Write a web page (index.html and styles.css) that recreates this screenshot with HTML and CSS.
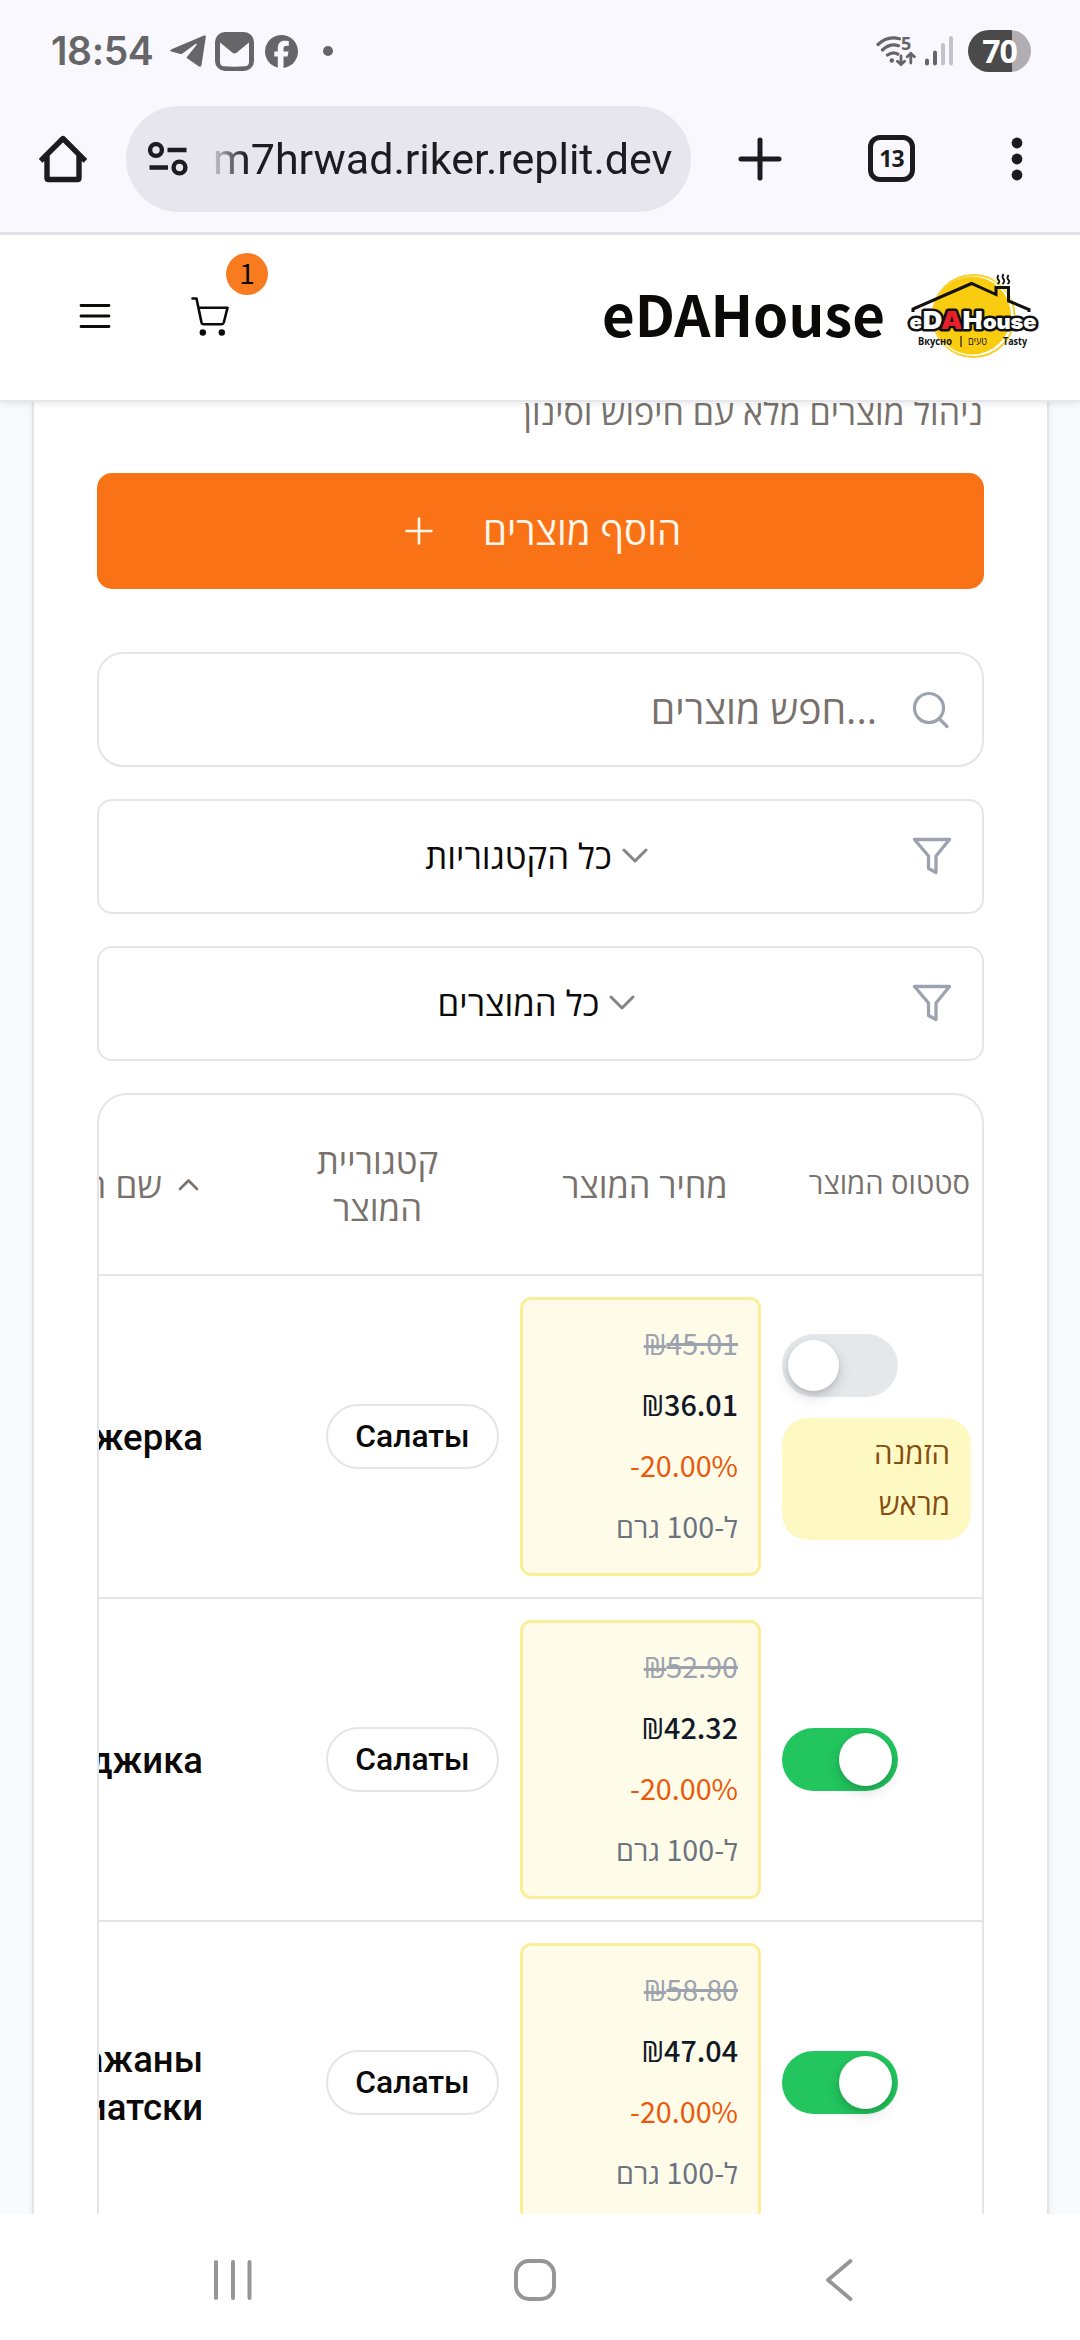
FILE: index.html
```html
<!DOCTYPE html>
<html lang="he">
<head>
<meta charset="utf-8">
<title>eDAHouse</title>
<link rel="stylesheet" href="styles.css">
</head>
<body>
<div class="status-bar">
  <div class="status-left">
    <span class="clock">18:54</span>
    <svg class="ic-telegram" width="36" height="32" viewBox="0 0 36 32"><path d="M1.5 14.2 34 .6c1.2-.4 2 .2 1.8 1.5L31.500 30c-.3 1.8-1.700 2.200-3 1.300l-11-7.800c-.9-.7-.9-1.300-.2-2.100L26.500 10c.8-1-.1-1.500-1-.9L12.500 18.500c-.9.6-2 .7-3 .3L1.400 16.500c-1.600-.5-1.700-1.500.1-2.300z"/></svg>
    <svg class="ic-mail" width="39" height="39" viewBox="0 0 39 39"><rect width="39" height="39" rx="10"/><path class="cut" d="M5 10.500 17.500 20.800q2 1.500 4 0L34 10.500V30q0 4-4 4.300-10.500.8-21 0Q5 34 5 30z"/></svg>
    <svg class="ic-fb" width="33" height="33" viewBox="0 0 33 33"><circle cx="16.500" cy="16.500" r="16.500"/><path class="cut" d="M12.800 33V21.500H9.300v-5h3.500v-3.200c0-5 2.500-7.500 7-7.500 1.800 0 3.200.2 4 .4v4.500h-2.300c-2.200 0-3 1-3 3v2.800h5l-.9 5h-4.100V33z"/></svg>
    <span class="status-dot"></span>
  </div>
  <div class="status-right">
    <svg class="ic-wifi" width="40" height="32" viewBox="0 0 40 32"><g fill="none" stroke="#666668" stroke-width="3.200" stroke-linecap="round"><path d="M2 9.500Q11.500.3 23.500 3.800M6.500 15q7.500-7 16-4.300M11.500 20q5.500-4 10.300-.8"/><path stroke-width="2.800" d="M25 21v8.500m-3.600-3.300 3.600 3.400 3.600-3.400M34.800 28v-9.500m-3.600 3.300 3.600-3.400 3.600 3.400"/></g><circle cx="15.800" cy="25.500" r="2.300"/><text x="25" y="14.500" font-size="18" font-weight="700">5</text></svg>
    <svg class="ic-signal" width="28" height="30" viewBox="0 0 28 30"><rect y="22.500" width="4" height="7" rx="2"/><rect x="8" y="14.500" width="4" height="15" rx="2"/><rect x="16" y="7" width="4" height="22.500" rx="2" fill="#c3c2c7"/><rect x="24" y="0" width="4" height="29.500" rx="2" fill="#c3c2c7"/></svg>
    <span class="battery">70</span>
  </div>
</div>
<div class="browser-bar">
  <svg class="ic-home" width="48" height="48" viewBox="0 0 48 48" fill="none" stroke="#1b1b20" stroke-width="5.400" stroke-linejoin="round" stroke-linecap="square"><path d="M8 21.500V43q0 1.500 1.500 1.500h29q1.500 0 1.500-1.500V21.500M3.500 24 24 3.500 44.500 24"/></svg>
  <div class="url-pill">
    <svg width="40" height="34" viewBox="0 0 40 34" fill="none" stroke="#1b1b20" stroke-width="4.400"><circle cx="8" cy="8" r="5.900"/><circle cx="31.500" cy="25.500" r="5.900"/><path d="M19.500 8h19M1.500 25.500H20"/></svg>
    <span class="url">m7hrwad.riker.replit.dev</span>
  </div>
  <svg class="ic-plus" width="44" height="44" viewBox="0 0 44 44" stroke="#1b1b20" stroke-width="5" stroke-linecap="round"><path d="M22 3v38M3 22h38"/></svg>
  <span class="tabs">13</span>
  <svg class="ic-dots" width="12" height="44" viewBox="0 0 12 44" fill="#1b1b20"><circle cx="6" cy="6" r="5.400"/><circle cx="6" cy="22" r="5.400"/><circle cx="6" cy="38" r="5.400"/></svg>
</div>
<header class="site-header">
  <div class="header-actions">
    <svg width="32" height="26" viewBox="0 0 32 26" stroke="#0c0a09" stroke-width="2.800" stroke-linecap="round"><path d="M2 2.500h28M2 13h28M2 23.500h28"/></svg>
    <span class="cart">
      <svg width="38" height="39" viewBox="0 0 38 39" fill="none" stroke="#0c0a09" stroke-width="2.600" stroke-linejoin="round" stroke-linecap="round"><path d="M1.500 1.500H5.500L10.500 25.500q.4 1.700 2.200 1.700H30.500q1.800 0 2.300-1.700L36.500 10.700H7.500"/><circle cx="11.800" cy="35.500" r="1.900" fill="#0c0a09"/><circle cx="30.800" cy="35.500" r="1.900" fill="#0c0a09"/></svg>
      <span class="cart-count">1</span>
    </span>
  </div>
  <div class="brand">
    <span class="brand-name">eDAHouse</span>
    <svg class="logo" width="134" height="86" viewBox="0 0 134 86">
      <circle cx="67.500" cy="43" r="41" fill="#fff" stroke="#f6cf2e" stroke-width="1.800"/>
      <circle cx="66" cy="42.500" r="39" fill="#f9cc10"/>
      <path d="M88 6q14 8 18 24M36 68q10 12 26 14" fill="none" stroke="#fff7c0" stroke-width="1.500"/>
      <path d="M7 39V36L65.500 10.500 90 21.500V14.500H102.500V28L123 36.500V39" fill="none" stroke="#111" stroke-width="3"/>
      <path d="M92.500 2q-2 3 0 5t-1 4M97.500 1q-2 3 0 5t-1 5M102.500 2q-2 3 0 5t-1 4" fill="none" stroke="#111" stroke-width="1.800"/>
      <g class="logo-word" stroke="#111" stroke-width="5" stroke-linejoin="round" paint-order="stroke" fill="#fff">
        <text x="3.500" y="56" font-size="20" textLength="127" lengthAdjust="spacingAndGlyphs">e<tspan font-size="25">D</tspan><tspan font-size="25" fill="#e8202a">A</tspan><tspan font-size="25">H</tspan>ouse</text>
      </g>
      <g class="logo-tag">
        <text x="12" y="72" textLength="34" lengthAdjust="spacingAndGlyphs">Вкусно</text>
        <text x="52" y="71">|</text>
        <text x="62" y="72" font-weight="400" textLength="19" lengthAdjust="spacingAndGlyphs">טעים</text>
        <text x="97" y="72" textLength="24" lengthAdjust="spacingAndGlyphs">Tasty</text>
      </g>
    </svg>
  </div>
</header>
<main class="page">
  <section class="card" dir="rtl">
    <p class="subtitle">ניהול מוצרים מלא עם חיפוש וסינון</p>
    <button class="add-button">
      <span>הוסף מוצרים</span>
      <svg width="28" height="28" viewBox="0 0 28 28" stroke="#fff7ed" stroke-width="2.600" stroke-linecap="round"><path d="M14 1.500v25M1.500 14h25"/></svg>
    </button>
    <div class="field search">
      <svg width="38" height="38" viewBox="0 0 38 38" fill="none" stroke="#9ca3af" stroke-width="3.200" stroke-linecap="round"><circle cx="17" cy="17" r="14.500"/><path d="m27.500 28 7.500 7.500"/></svg>
      <span class="placeholder" dir="ltr">חפש מוצרים...</span>
    </div>
    <div class="field select">
      <svg class="funnel" width="40" height="38" viewBox="0 0 40 38" fill="none" stroke="#9ca3af" stroke-width="3.300" stroke-linejoin="round"><path d="M2.500 2.500H37.500L24 19V35.500L16.500 31.500V19z"/></svg>
      <span class="value" dir="ltr"><span>כל הקטגוריות</span><svg width="26" height="16" viewBox="0 0 26 16" fill="none" stroke="#858585" stroke-width="3" stroke-linecap="round" stroke-linejoin="round"><path d="M2 2l11 11L24 2"/></svg></span>
    </div>
    <div class="field select">
      <svg class="funnel" width="40" height="38" viewBox="0 0 40 38" fill="none" stroke="#9ca3af" stroke-width="3.300" stroke-linejoin="round"><path d="M2.500 2.500H37.500L24 19V35.500L16.500 31.500V19z"/></svg>
      <span class="value" dir="ltr"><span>כל המוצרים</span><svg width="26" height="16" viewBox="0 0 26 16" fill="none" stroke="#858585" stroke-width="3" stroke-linecap="round" stroke-linejoin="round"><path d="M2 2l11 11L24 2"/></svg></span>
    </div>
    <div class="table">
      <div class="row head">
        <div class="c-status">סטטוס המוצר</div>
        <div class="c-price">מחיר המוצר</div>
        <div class="c-cat">קטגוריית<br>המוצר</div>
        <div class="c-name"><svg width="21" height="13" viewBox="0 0 21 13" fill="none" stroke="#78716c" stroke-width="2.600" stroke-linecap="round" stroke-linejoin="round"><path d="M2 11l8.500-8.500L19 11"/></svg><span>שם המוצר</span></div>
      </div>
      <div class="row">
        <div class="c-status"><span class="toggle"><i></i></span><span class="preorder">הזמנה<br>מראש</span></div>
        <div class="c-price"><div class="price" dir="ltr"><s><span class="nis">₪</span>45.01</s><b><span class="nis">₪</span>36.01</b><em>-20.00%</em><small dir="rtl">ל-100 גרם</small></div></div>
        <div class="c-cat"><span class="tag">Салаты</span></div>
        <div class="c-name" dir="ltr">Аджерка</div>
      </div>
      <div class="row">
        <div class="c-status"><span class="toggle on"><i></i></span></div>
        <div class="c-price"><div class="price" dir="ltr"><s><span class="nis">₪</span>52.90</s><b><span class="nis">₪</span>42.32</b><em>-20.00%</em><small dir="rtl">ל-100 גרם</small></div></div>
        <div class="c-cat"><span class="tag">Салаты</span></div>
        <div class="c-name" dir="ltr">Аджика</div>
      </div>
      <div class="row">
        <div class="c-status"><span class="toggle on"><i></i></span></div>
        <div class="c-price"><div class="price" dir="ltr"><s><span class="nis">₪</span>58.80</s><b><span class="nis">₪</span>47.04</b><em>-20.00%</em><small dir="rtl">ל-100 גרם</small></div></div>
        <div class="c-cat"><span class="tag">Салаты</span></div>
        <div class="c-name" dir="ltr">Баклажаны<br>по-азиатски</div>
      </div>
    </div>
  </section>
</main>
<nav class="nav-bar">
  <svg width="40" height="42" viewBox="0 0 40 42" stroke="#969696" stroke-width="4" stroke-linecap="round"><path d="M3 3v36M20 3v36M36.500 3v36"/></svg>
  <svg class="nav-home" width="44" height="44" viewBox="0 0 44 44" fill="none" stroke="#969696" stroke-width="4"><rect x="3" y="3" width="38" height="38" rx="13"/></svg>
  <svg width="28" height="44" viewBox="0 0 28 44" fill="none" stroke="#969696" stroke-width="3.800" stroke-linecap="round" stroke-linejoin="round"><path d="M25.500 3 3 22l22.500 19"/></svg>
</nav>
</body>
</html>
```
FILE: styles.css
```css
* { box-sizing: border-box; }
body {
  margin: 0;
  width: 1080px;
  height: 2340px;
  overflow: hidden;
  display: flex;
  flex-direction: column;
  background: #fff;
  font-family: "Noto Sans CJK JP", "Open Sans", sans-serif;
  color: #0c0a09;
}
svg { display: block; flex: none; }

/* Phone status bar */
.status-bar {
  height: 102px;
  flex: none;
  display: flex;
  justify-content: space-between;
  padding: 0 49px 0 51px;
  background: #f9f8ff;
  fill: #666668;
  color: #666668;
}
.status-left, .status-right { display: flex; align-items: center; height: 102px; }
.clock { font: 600 39px/50px Inter, sans-serif; width: 119px; letter-spacing: -0.4px; }
.cut { fill: #f9f8ff; }
.ic-mail { margin-left: 9px; }
.ic-fb { margin-left: 11px; }
.status-dot { width: 10px; height: 10px; border-radius: 50%; background: #666668; margin-left: 25px; }
.ic-wifi text { font-family: "Open Sans", sans-serif; }
.ic-signal { margin-left: 9px; }
.battery {
  width: 63px;
  height: 42px;
  margin-left: 15px;
  border-radius: 21px;
  background: linear-gradient(90deg, #4a4a4b 70%, #b0aeb3 70%);
  color: #fff;
  font: 700 32px/42px "Open Sans", sans-serif;
  text-align: center;
  letter-spacing: -1px;
}

/* Browser toolbar */
.browser-bar {
  height: 133px;
  flex: none;
  display: flex;
  align-items: center;
  padding: 0 57px 17px 39px;
  background: #f9f8ff;
  border-bottom: 3px solid #e3e2e8;
}
.url-pill {
  width: 565px;
  height: 106px;
  margin-left: 39px;
  padding-left: 22px;
  border-radius: 53px;
  background: #e7e6ee;
  display: flex;
  align-items: center;
}
.url {
  margin-left: 25px;
  font: 400 43px/60px Roboto, sans-serif;
  color: #1b1b20;
  white-space: nowrap;
  -webkit-mask-image: linear-gradient(90deg, rgba(0,0,0,.15), #000 34px);
  mask-image: linear-gradient(90deg, rgba(0,0,0,.15), #000 34px);
}
.ic-plus { margin-left: 47px; }
.tabs {
  width: 47px;
  height: 47px;
  margin-left: 86px;
  border: 5px solid #1b1b20;
  border-radius: 12px;
  font: 700 23px/37px "Open Sans", sans-serif;
  text-align: center;
  color: #1b1b20;
  letter-spacing: -1px;
}
.ic-dots { margin-left: 96px; }

/* Site header */
.site-header {
  position: relative;
  z-index: 2;
  height: 167px;
  flex: none;
  display: flex;
  align-items: center;
  justify-content: space-between;
  padding: 0 40px 0 79px;
  background: #fff;
  border-bottom: 2px solid #e5e7eb;
  box-shadow: 0 3px 6px rgba(0,0,0,.07);
}
.header-actions { display: flex; align-items: center; gap: 80px; padding-bottom: 3px; }
.cart { position: relative; }
.cart-count {
  position: absolute;
  left: 35px;
  top: -44px;
  width: 42px;
  height: 42px;
  border-radius: 50%;
  background: #f97b20;
  font-size: 28px;
  line-height: 39px;
  text-align: center;
}
.brand { display: flex; align-items: center; gap: 21px; padding-bottom: 3px; }
.brand-name { font-weight: 700; font-size: 56.400px; line-height: 80px; padding-bottom: 6px; }
.logo-word { font-family: Inter, "Open Sans", sans-serif; font-weight: 900; }
.logo-tag { font-family: "Open Sans", sans-serif; font-weight: 700; font-size: 10.500px; fill: #111; }

/* Page content */
.page { flex: 1; min-height: 0; overflow: hidden; background: #f8fafc; padding: 0 31px 0 32px; }
.card {
  height: 2000px;
  margin-top: -20px;
  padding: 0 63px;
  background: #fff;
  border: 2px solid #e5e5e5;
  box-shadow: 0 1px 6px rgba(0,0,0,.08);
  font-family: "Open Sans", sans-serif;
}
.subtitle { margin: 5px 0 0; padding-right: 1px; height: 84px; font-size: 34.100px; line-height: 46px; color: #78716c; }
.add-button {
  display: flex;
  align-items: center;
  justify-content: center;
  gap: 50px;
  width: 100%;
  height: 116px;
  padding: 0 0 0 5px;
  border: 0;
  border-radius: 15px;
  background: #f97316;
  color: #fff7ed;
  font: 500 38.500px/50px "Open Sans", sans-serif;
}
.add-button span { padding-bottom: 2px; }
.field {
  display: flex;
  align-items: center;
  height: 115px;
  margin-bottom: 32px;
  border: 2px solid #e5e5e5;
  border-radius: 15px;
}
.search { margin-top: 63px; border-radius: 26px; padding-right: 32px; }
.placeholder { margin-right: 35px; padding-bottom: 2px; font-size: 39.200px; line-height: 50px; color: #78716c; }
.select { position: relative; justify-content: center; padding-right: 8px; }
.funnel { position: absolute; right: 30px; top: 36px; }
.value { display: flex; align-items: center; gap: 10px; font-size: 34.800px; line-height: 50px; padding-bottom: 2px; }

/* Product table */
.table {
  height: 1250px;
  border: 2px solid #e5e5e5;
  border-radius: 30px;
  overflow: hidden;
}
.row { display: flex; align-items: center; height: 323px; width: 1100px; border-bottom: 2px solid #e5e5e5; }
.row > div { flex: none; }
.head { height: 181px; color: #78716c; font-size: 34.800px; line-height: 47px; font-weight: 500; text-align: center; }
.c-status { width: 211px; padding: 0 11px; display: flex; flex-direction: column; align-items: flex-end; gap: 21px; }
.head .c-status { font-size: 29.200px; padding: 0 12px 3px; align-items: flex-start; }
.c-price { width: 261px; padding: 0 10px; }
.head .c-price { padding: 0 0 0 9px; font-size: 34.400px; }
.c-cat { width: 265px; padding-right: 11px; }
.head .c-cat { padding: 0 0 2px; }
.c-name { width: 300px; padding: 2px 42px 0 0; text-align: right; font: 500 36.500px/47.500px Roboto, sans-serif; }
.head .c-name { display: flex; align-items: center; gap: 16px; padding: 0 46px 0 0; font: 500 35px/47px "Open Sans", sans-serif; }
.toggle { width: 116px; height: 63px; padding: 6px; border-radius: 32px; background: #e5e7eb; display: flex; direction: ltr; align-items: center; }
.toggle i { width: 51px; height: 51px; border-radius: 50%; background: #fff; box-shadow: 0 6px 14px rgba(0,0,0,.14), 0 2px 5px rgba(0,0,0,.1); }
.toggle.on { background: #22c55e; justify-content: flex-end; }
.toggle.on i { width: 53px; height: 53px; }
.preorder { width: 189px; height: 122px; padding: 9px 21px; border-radius: 26px; background: #fef9c3; color: #854d0e; font-size: 29.500px; line-height: 51px; font-weight: 500; }
.price {
  height: 279px;
  padding: 12px 20px;
  display: flex;
  flex-direction: column;
  align-items: flex-end;
  background: #fefce8;
  border: 3px solid #fbee9a;
  border-radius: 11px;
  font: 400 28.700px/61px "Noto Sans CJK JP", "Open Sans", sans-serif;
}
.price s { color: #9ca3af; text-decoration-thickness: 3px; }
.price b { color: #111827; font-weight: 500; }
.price em { color: #ea580c; font-style: normal; }
.price small { color: #6b7280; font-size: inherit; }
.nis { font-family: "Open Sans", sans-serif; line-height: 1; }
.tag { display: inline-block; height: 65px; width: 173px; border: 2px solid #e5e5e5; border-radius: 33px; text-align: center; font: 500 31.800px/61px Roboto, sans-serif; }

/* Android navigation */
.nav-bar { height: 126px; flex: none; display: flex; align-items: center; justify-content: space-between; padding: 6px 227px 0 213px; background: #fff; }
.nav-home { margin-right: 8px; }
```
